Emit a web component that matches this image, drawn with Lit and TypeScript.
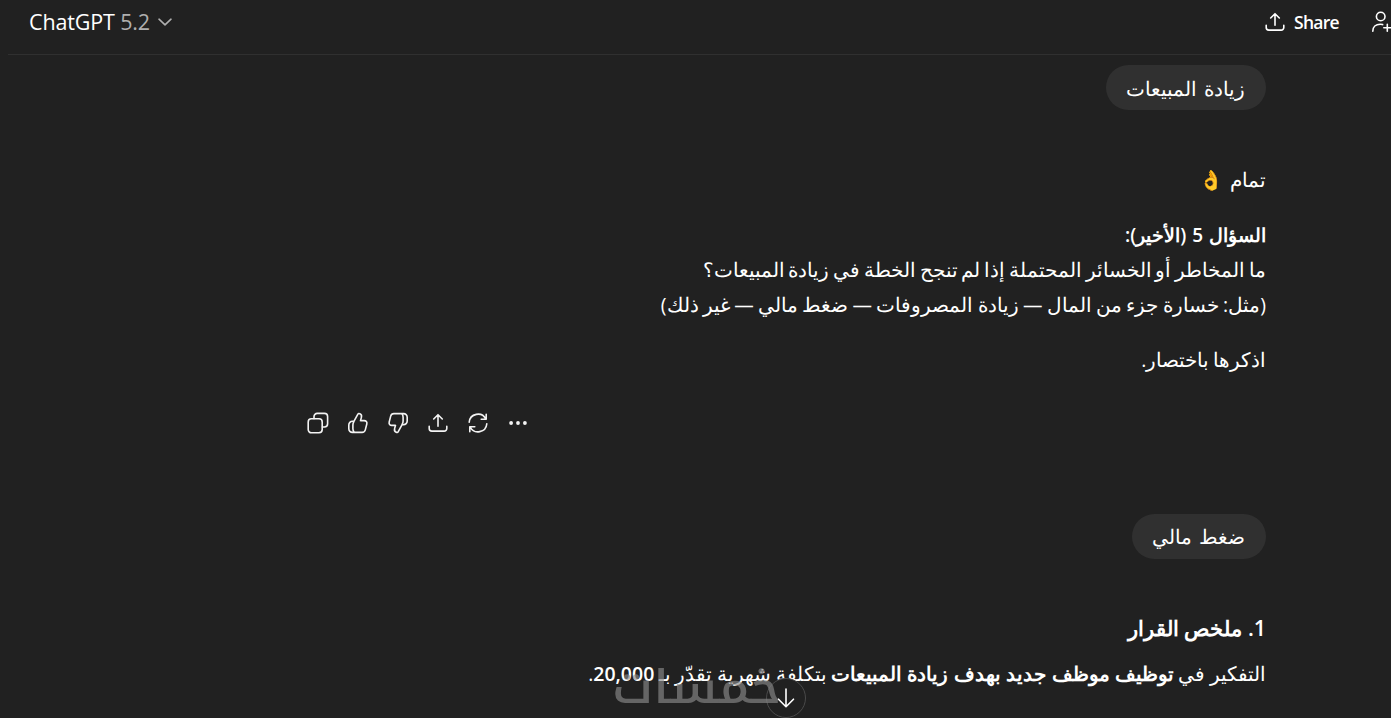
import { LitElement, html, css, svg } from "lit";
import { customElement, property } from "lit/decorators.js";

const ICONS = {
    chevron: svg`<path d="M4 7.200l6 5.600 6-5.600" />`,
    share: svg`<path d="M10 13.200V1.800M5.700 6L10 1.700 14.300 6M1.200 13.200v2.300a2.600 2.600 0 0 0 2.600 2.600h12.400a2.600 2.600 0 0 0 2.600-2.600v-2.300" />`,
    addUser: svg`<circle cx="8.700" cy="4.500" r="4.300" /><path d="M.8 19.200c0-4.300 3-7 7.400-7 .9 0 1.700.1 2.400.4M15.300 12.200v7M11.800 15.700h7" />`,
    copy: svg`<rect x="0.200" y="5.800" width="14" height="14" rx="3.200" /><path d="M6 5.600V3.600A3.200 3.200 0 0 1 9.200.4h7.200a3.200 3.200 0 0 1 3.200 3.200v7.200a3.200 3.200 0 0 1-3.200 3.200h-2" />`,
    like: svg`<path d="M5.900 8.300L9.900 1.200c.3-.6.800-.8 1.400-.6 1.800.5 2.600 2 2.100 3.800l-.9 3.200h3.600c2 0 3.200 1.500 2.700 3.400l-1.500 5.900a3.300 3.300 0 0 1-3.200 2.500H4.400A3.600 3.600 0 0 1 .8 15.800v-3.900a3.600 3.600 0 0 1 3.600-3.600h1.500zM5.900 8.500a6.500 6.500 0 0 0-1 3.500v3.800c0 1.400.4 2.500 1.300 3.500" />`,
    more: svg`<g fill="currentColor" stroke="none"><circle cx="3.100" cy="10" r="1.900" /><circle cx="10" cy="10" r="1.900" /><circle cx="16.900" cy="10" r="1.900" /></g>`,
    refresh: svg`<path d="M1.200 9.300A8.800 8.800 0 0 1 17.800 6M18.200 1.200v5h-5M18.800 10.700A8.800 8.800 0 0 1 2.200 14M1.800 18.800v-5h5" />`,
    down: svg`<path d="M10 1v17.500M2.500 11.200l7.500 7.500 7.500-7.500" />`
};

@customElement("chat-icon")
class ChatIcon extends LitElement {
    static styles = css`
    :host {
        display: block;
        flex: none;
        width: 20px;
        height: 20px;
    }

    svg {
        display: block;
        width: 100%;
        height: 100%;
        overflow: visible;
        fill: none;
        stroke: currentColor;
        stroke-width: 1.600;
        stroke-linecap: round;
        stroke-linejoin: round;
    }

    .flipped {
        transform: rotate(180deg);
    }
  `;

    @property() name = "";

    render() {
        // thumbs down is the like glyph turned around
        if (this.name === "dislike") {
            return html`<svg class="flipped" viewBox="0 0 20 20">${ICONS.like}</svg>`;
        }
        return html`<svg viewBox="0 0 20 20">${ICONS[this.name]}</svg>`;
    }
}

@customElement("app-root")
class AppRoot extends LitElement {
    static styles = css`
    :host {
        display: block;
        position: relative;
        height: 718px;
        overflow: hidden;
        background: #212121;
        color: #fff;
        font: 19.5px/35px "Open Sans", sans-serif;
    }

    .header {
        box-sizing: border-box;
        display: flex;
        align-items: center;
        height: 55px;
        margin-left: 8px;
        padding: 0 0 10px 21px;
        border-bottom: 1px solid #303030;
        white-space: nowrap;
    }

    .model {
        margin-top: -2px;
        font-size: 21.500px;
        letter-spacing: -0.150px;
    }

    .version {
        color: #afafaf;
    }

    .chevron {
        width: 20px;
        height: 20px;
        margin-left: 5px;
        color: #afafaf;
    }

    .share {
        display: flex;
        align-items: center;
        gap: 9px;
        margin-left: auto;
        font-size: 17.500px;
        font-weight: 600;
        letter-spacing: -0.700px;
    }

    .add-user {
        margin: 0 -1px 0 33px;
    }

    .thread {
        display: flex;
        flex-direction: column;
        width: 960px;
        margin-left: 306px;
        padding-top: 10px;
    }

    .bubble {
        box-sizing: border-box;
        align-self: flex-start;
        height: 45px;
        padding: 5px 20.500px;
        border-radius: 23px;
        background: #303030;
        font-size: 20px;
        word-spacing: 2px;
        white-space: nowrap;
    }

    .first {
        padding-top: 6px;
    }

    .answer {
        display: flex;
        flex-direction: column;
        gap: 20px;
        padding-top: 52px;
    }

    p, h3 {
        margin: 0;
        white-space: nowrap;
    }

    b {
        font-weight: 600;
        line-height: 1;
    }

    h3 {
        font-size: 21.400px;
        font-weight: 600;
    }

    .okay {
        word-spacing: 2px;
    }

    .title {
        font-size: 19px;
        word-spacing: 1px;
    }

    .question {
        word-spacing: -1.300px;
    }

    .example {
        word-spacing: -0.750px;
    }

    .closing {
        word-spacing: -1.500px;
    }

    .summary {
        gap: 11px;
        padding-top: 51px;
    }

    .summary p {
        word-spacing: -0.500px;
    }

    .goal {
        font-size: 19.800px;
        word-spacing: 0.200px;
    }

    .actions {
        display: flex;
        gap: 20px;
        margin: 35.500px 0 81.500px 2.400px;
        color: #f3f3f3;
    }

    .watermark {
        position: absolute;
        left: 608px;
        top: 660px;
        width: 180px;
        height: 58px;
        overflow: visible;
        fill: #8a8a8a;
        opacity: 0.650;
        pointer-events: none;
        font: 500 46px/1 "Noto Kufi Arabic", "Open Sans", sans-serif;
    }

    .to-bottom {
        position: absolute;
        left: 766px;
        top: 678px;
        display: grid;
        place-items: center;
        box-sizing: border-box;
        width: 40px;
        height: 40px;
        border: 1px solid #4a4a4a;
        border-radius: 50%;
        background: #212121;
    }
  `;

    render() {
        return html`
        <div class="header">
            <span class="model">ChatGPT <span class="version">5.2</span></span>
            <chat-icon class="chevron" name="chevron"></chat-icon>
            <div class="share"><chat-icon name="share"></chat-icon>Share</div>
            <chat-icon class="add-user" name="addUser"></chat-icon>
        </div>
        <div class="thread" dir="rtl">
            <div class="bubble first">زيادة المبيعات</div>
            <div class="answer">
                <p class="okay">تمام 👌</p>
                <p>
                    <b class="title">السؤال 5 (الأخير):</b><br>
                    <span class="question">ما المخاطر أو الخسائر المحتملة إذا لم تنجح الخطة في زيادة المبيعات؟</span><br>
                    <span class="example">(مثل: خسارة جزء من المال — زيادة المصروفات — ضغط مالي — غير ذلك)</span>
                </p>
                <p class="closing">اذكرها باختصار.</p>
            </div>
            <div class="actions" dir="ltr">
                ${["copy", "like", "dislike", "share", "refresh", "more"].map(name => html`<chat-icon name=${name}></chat-icon>`)}
            </div>
            <div class="bubble">ضغط مالي</div>
            <div class="answer summary">
                <h3>1. ملخص القرار</h3>
                <p>التفكير في <b class="goal">توظيف موظف جديد بهدف زيادة المبيعات</b> بتكلفة شهرية تقدّر بـ <b>20,000</b>.</p>
            </div>
        </div>
        <div class="to-bottom"><chat-icon name="down"></chat-icon></div>
        <svg class="watermark" viewBox="0 0 180 58">
            <text x="4" y="43" textLength="169" lengthAdjust="spacingAndGlyphs">خمسات</text>
        </svg>
        `;
    }
}
